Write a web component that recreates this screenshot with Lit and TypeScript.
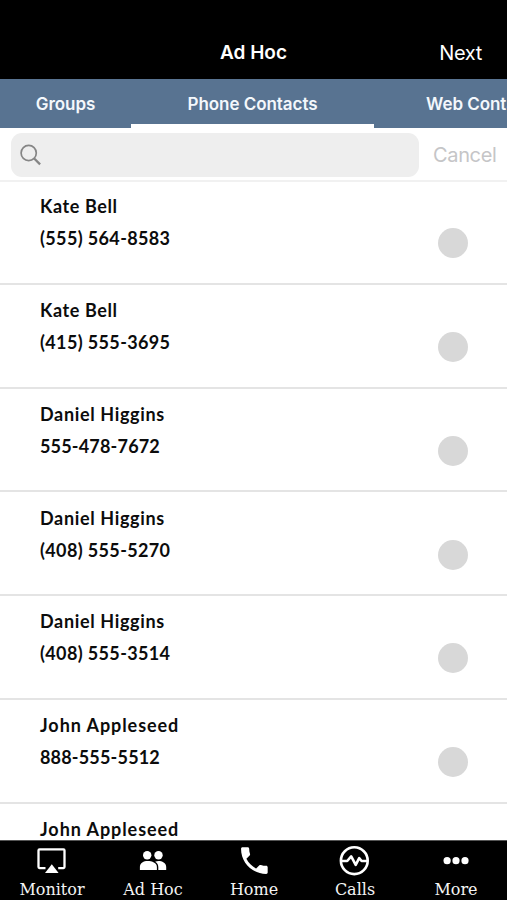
import { LitElement, html, css, svg } from "lit";
import { customElement, property } from "lit/decorators.js";
import { styleMap } from "lit/directives/style-map.js";

interface Contact {
  name: string;
  phone: string;
}

const CONTACTS: Contact[] = [
  { name: "Kate Bell", phone: "(555) 564-8583" },
  { name: "Kate Bell", phone: "(415) 555-3695" },
  { name: "Daniel Higgins", phone: "555-478-7672" },
  { name: "Daniel Higgins", phone: "(408) 555-5270" },
  { name: "Daniel Higgins", phone: "(408) 555-3514" },
  { name: "John Appleseed", phone: "888-555-5512" },
  { name: "John Appleseed", phone: "888-555-1212" },
];

const NAME_TRACKING: Record<string, number> = {
  "Kate Bell": 0.6,
  "Daniel Higgins": 0.65,
  "John Appleseed": 0.93,
};

// Numbers with an area code in brackets are set slightly wider.
const phoneTracking = (phone: string) => (phone.startsWith("(") ? 0.36 : 0.18);

const ICONS = {
  monitor: svg`<path d="M13.500 23.100H7.500a1 1 0 0 1-1-1V5.400a1 1 0 0 1 1-1H31.500a1 1 0 0 1 1 1V22.100a1 1 0 0 1-1 1H26.200" fill="none" stroke="#fff" stroke-width="2.300"/><path d="M12 29L19.800 18L27.600 29Z" fill="#000"/><path d="M13 28L19.800 19.200L26.600 28Z" fill="#fff"/>`,
  people: svg`<g fill="#fff"><circle cx="14.200" cy="10.200" r="4.200"/><circle cx="25.500" cy="10.200" r="4.200"/><path d="M25.300 25H33.200V22C33.200 18 29 16.100 25.500 16.100C24.400 16.100 23.200 16.300 22.100 16.700C24.300 18 25.300 19.800 25.300 22Z"/><path d="M6.900 25V22C6.900 18 10.700 16.100 14.600 16.100C19 16.100 23.900 18 23.900 22V25Z"/></g>`,
  phone: svg`<path transform="translate(2.600 -2.100) scale(1.480)" fill="#fff" d="M6.620 10.790c1.440 2.830 3.760 5.140 6.590 6.590l2.200-2.200c.27-.27.67-.36 1.020-.24 1.120.37 2.330.57 3.570.57.55 0 1 .45 1 1V20c0 .55-.45 1-1 1-9.390 0-17-7.610-17-17 0-.55.45-1 1-1h3.500c.55 0 1 .45 1 1 0 1.250.2 2.450.57 3.570.11.35.03.74-.25 1.020l-2.200 2.200z"/>`,
  pulse: svg`<g fill="none" stroke="#fff" stroke-width="2.600"><circle cx="19.300" cy="15.700" r="13.400"/><path d="M5.900 16H12.200L16.200 11.400L20.700 19.800L24.200 13.200L26.600 16H32.700" stroke-linejoin="round"/></g>`,
  more: svg`<g fill="#fff"><circle cx="11.100" cy="15.700" r="3.600"/><circle cx="20" cy="15.700" r="3.600"/><circle cx="29" cy="15.700" r="3.600"/></g>`,
};

@customElement("contact-row")
export class ContactRow extends LitElement {
  @property({ attribute: false }) contact!: Contact;

  static styles = css`
    :host {
      display: flex;
      justify-content: space-between;
      box-sizing: border-box;
      height: 103.850px;
      flex: none;
      padding: 13.200px 39px 0 40px;
      border-bottom: 2px solid #e4e4e4;
      color: #0c0c0c;
      font: 700 18px/24px Lato, sans-serif;
      white-space: nowrap;
    }
    .phone {
      margin-top: 8px;
    }
    .check {
      width: 30px;
      height: 30px;
      margin-top: 34px;
      border-radius: 50%;
      background: #d8d8d8;
    }
  `;

  render() {
    const { name, phone } = this.contact;
    return html`
      <div>
        <div class="name" style=${styleMap({ letterSpacing: `${NAME_TRACKING[name] ?? 0.5}px` })}>${name}</div>
        <div class="phone" style=${styleMap({ letterSpacing: `${phoneTracking(phone)}px` })}>${phone}</div>
      </div>
      <div class="check"></div>
    `;
  }
}

@customElement("app-root")
export class AppRoot extends LitElement {
  static styles = css`
    :host {
      display: flex;
      flex-direction: column;
      width: 507px;
      height: 900px;
      overflow: hidden;
      background: #fff;
      font-family: Inter, sans-serif;
      white-space: nowrap;
    }
    .header {
      display: grid;
      grid-template-columns: 1fr auto 1fr;
      align-items: center;
      height: 79px;
      padding: 26px 25px 0;
      box-sizing: border-box;
      background: #000;
      color: #fff;
      flex: none;
    }
    .title {
      grid-column: 2;
      font-size: 19px;
      font-weight: 600;
    }
    .next {
      justify-self: end;
      font-size: 20px;
      letter-spacing: -0.350px;
    }
    .tabs {
      display: flex;
      height: 49px;
      flex: none;
      background: #587391;
      color: #f4f8fc;
      font-size: 17px;
      font-weight: 600;
      line-height: 51px;
      overflow: hidden;
    }
    .tab {
      box-sizing: border-box;
      flex: none;
      height: 49px;
      text-align: center;
      letter-spacing: -0.050px;
    }
    .groups {
      width: 131px;
    }
    .phones {
      width: 243px;
      border-bottom: 4px solid #fff;
    }
    .web {
      padding-left: 52px;
    }
    .search {
      display: flex;
      align-items: center;
      height: 54px;
      flex: none;
      box-sizing: border-box;
      padding: 1px 11px 0 11px;
      border-bottom: 2px solid #f1f1f1;
    }
    .field {
      display: flex;
      align-items: center;
      flex: none;
      width: 408px;
      height: 44px;
      padding-left: 8px;
      box-sizing: border-box;
      border-radius: 11px;
      background: #eee;
    }
    .cancel {
      margin-left: 14px;
      color: #c5c5c7;
      font-size: 20px;
      letter-spacing: -0.350px;
    }
    .list {
      display: flex;
      flex-direction: column;
      flex: 1;
      min-height: 0;
      margin-top: -1.200px;
      overflow: hidden;
    }
    .bar {
      display: grid;
      grid-template-columns: repeat(5, 101px);
      height: 60px;
      flex: none;
      box-sizing: border-box;
      border-top: 1px solid #555;
      padding-left: 1.500px;
      background: #000;
      color: #f4f4f4;
      font: 16px/20px "DejaVu Serif", serif;
    }
    .item {
      display: flex;
      flex-direction: column;
      align-items: center;
      padding-top: 4px;
    }
    .label {
      margin-top: 4px;
    }
  `;

  private item(icon: unknown, label: string) {
    return html`<div class="item">
      <svg width="40" height="31" viewBox="0 0 40 31">${icon}</svg>
      <span class="label">${label}</span>
    </div>`;
  }

  render() {
    return html`
      <div class="header">
        <span class="title">Ad Hoc</span>
        <span class="next">Next</span>
      </div>
      <div class="tabs">
        <div class="tab groups">Groups</div>
        <div class="tab phones">Phone Contacts</div>
        <div class="tab web">Web Contacts</div>
      </div>
      <div class="search">
        <div class="field">
          <svg width="24" height="24" viewBox="0 0 24 24" fill="none" stroke="#858585">
            <circle cx="9.700" cy="10" r="7.600" stroke-width="1.700" />
            <path d="M15.200 15.500L21.100 21.400" stroke-width="2.300" />
          </svg>
        </div>
        <span class="cancel">Cancel</span>
      </div>
      <div class="list">
        ${CONTACTS.map((c) => html`<contact-row .contact=${c}></contact-row>`)}
      </div>
      <div class="bar">
        ${this.item(ICONS.monitor, "Monitor")}
        ${this.item(ICONS.people, "Ad Hoc")}
        ${this.item(ICONS.phone, "Home")}
        ${this.item(ICONS.pulse, "Calls")}
        ${this.item(ICONS.more, "More")}
      </div>
    `;
  }
}
